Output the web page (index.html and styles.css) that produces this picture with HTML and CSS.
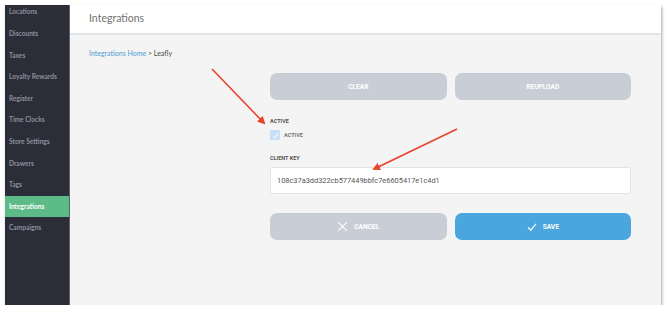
FILE: index.html
```html
<!DOCTYPE html>
<html>
<head>
<meta charset="utf-8">
<link rel="stylesheet" href="styles.css">
</head>
<body>
<div class="frame">
  <nav class="sidebar">
    <ul class="menu">
      <li>Locations</li>
      <li>Discounts</li>
      <li>Taxes</li>
      <li>Loyalty Rewards</li>
      <li>Register</li>
      <li>Time Clocks</li>
      <li>Store Settings</li>
      <li>Drawers</li>
      <li>Tags</li>
      <li class="active">Integrations</li>
      <li>Campaigns</li>
    </ul>
  </nav>
  <main class="main">
    <header class="header">Integrations</header>
    <section class="body">
      <div class="crumbs"><span class="link">Integrations Home</span> &gt; Leafly</div>
      <div class="form">
        <div class="btn-row">
          <button class="btn grey">CLEAR</button>
          <button class="btn grey">REUPLOAD</button>
        </div>
        <div class="label first">ACTIVE</div>
        <div class="check-row">
          <span class="checkbox"><svg width="9" height="9" viewBox="0 0 10 10"><path d="M2 5.2 L4.2 7.4 L8.2 2.6" fill="none" stroke="#fff" stroke-width="1.1"/></svg></span>
          <span class="check-text">ACTIVE</span>
        </div>
        <div class="label">CLIENT KEY</div>
        <div class="input">108c37a3dd322cb577449bbfc7e6605417e1c4d1</div>
        <div class="btn-row bottom">
          <button class="btn grey"><svg width="11" height="11" viewBox="0 0 10 10"><path d="M1 1 L9 9 M9 1 L1 9" stroke="#fff" stroke-width="1"/></svg>CANCEL</button>
          <button class="btn blue"><svg width="10" height="10" viewBox="0 0 10 10"><path d="M1 5.5 L3.8 8.2 L9 1.8" fill="none" stroke="#fff" stroke-width="1.1"/></svg>SAVE</button>
        </div>
      </div>
    </section>
  </main>
  <svg class="arrows" width="668" height="312" viewBox="0 0 668 312">
    <defs>
      <marker id="ah" markerWidth="8" markerHeight="8" refX="6" refY="4" orient="auto" markerUnits="userSpaceOnUse">
        <path d="M0 0 L8 4 L0 8 Z" fill="#e8412c"/>
      </marker>
    </defs>
    <line x1="212" y1="69" x2="264" y2="123" stroke="#e8412c" stroke-width="1.6" marker-end="url(#ah)"/>
    <line x1="457" y1="129" x2="374" y2="169" stroke="#e8412c" stroke-width="1.6" marker-end="url(#ah)"/>
  </svg>
</div>
</body>
</html>
```

FILE: styles.css
```css
html, body {
  margin: 0;
  padding: 0;
  background: #ffffff;
}
.frame {
  position: relative;
  margin: 5px 0 0 5px;
  width: 656px;
  height: 300px;
  display: flex;
  box-shadow: 1px 2px 3px rgba(0, 0, 0, 0.35);
}
.sidebar {
  width: 64px;
  flex: none;
  background: #2b2e39;
  border-right: 1px solid #5e616c;
  overflow: hidden;
}
.menu {
  list-style: none;
  margin: -3.6px 0 0 0;
  padding: 0;
}
.menu li {
  height: 21.6px;
  line-height: 21.6px;
  padding-left: 4px;
  font-family: "Lato", "Open Sans", sans-serif;
  font-size: 6.6px;
  font-weight: 700;
  color: #8b909b;
  white-space: nowrap;
}
.menu li.active {
  background: #5cbb87;
  color: #ffffff;
}
.main {
  flex: 1;
  background: #f4f4f4;
  display: flex;
  flex-direction: column;
}
.header {
  height: 28px;
  background: #ffffff;
  border-bottom: 2px solid #e3e3ea;
  padding-left: 19px;
  line-height: 27px;
  font-family: "Lato", "Open Sans", sans-serif;
  font-size: 10.5px;
  color: #727272;
}
.body {
  padding: 13px 19px 0 19px;
}
.crumbs {
  font-family: "Lato", "Open Sans", sans-serif;
  font-size: 7px;
  line-height: 10px;
  color: #4a4a4a;
}
.crumbs .link {
  color: #4a9bd6;
}
.form {
  margin: 15px 0 0 181px;
  width: 361px;
  font-family: "Roboto", sans-serif;
}
.btn-row {
  display: flex;
  gap: 8px;
}
.btn-row.bottom {
  margin-top: 19px;
}
.btn {
  flex: 1;
  height: 27px;
  border: none;
  border-radius: 7px;
  color: #ffffff;
  font-family: "Roboto", sans-serif;
  font-size: 6.6px;
  font-weight: 700;
  display: flex;
  align-items: center;
  justify-content: center;
  gap: 6px;
  padding: 0;
}
.btn.grey {
  background: #c9ced6;
}
.btn.blue {
  background: #4aa6dd;
}
.label {
  font-size: 5.5px;
  font-weight: 700;
  color: #555;
  line-height: 7px;
  margin-top: 15px;
}
.label.first {
  margin-top: 18px;
}
.check-row {
  display: flex;
  align-items: center;
  gap: 4px;
  margin-top: 5px;
}
.checkbox {
  width: 10px;
  height: 10px;
  background: #c7e0f6;
  display: flex;
  align-items: center;
  justify-content: center;
}
.check-text {
  font-size: 5.5px;
  font-weight: 700;
  color: #777;
}
.input {
  margin-top: 5px;
  background: #ffffff;
  border: 1px solid #e4e4e4;
  border-radius: 2px;
  box-sizing: border-box;
  height: 27px;
  padding-left: 6px;
  line-height: 25px;
  font-size: 7.4px;
  color: #555;
}
.arrows {
  position: absolute;
  left: -5px;
  top: -5px;
  pointer-events: none;
}
```
